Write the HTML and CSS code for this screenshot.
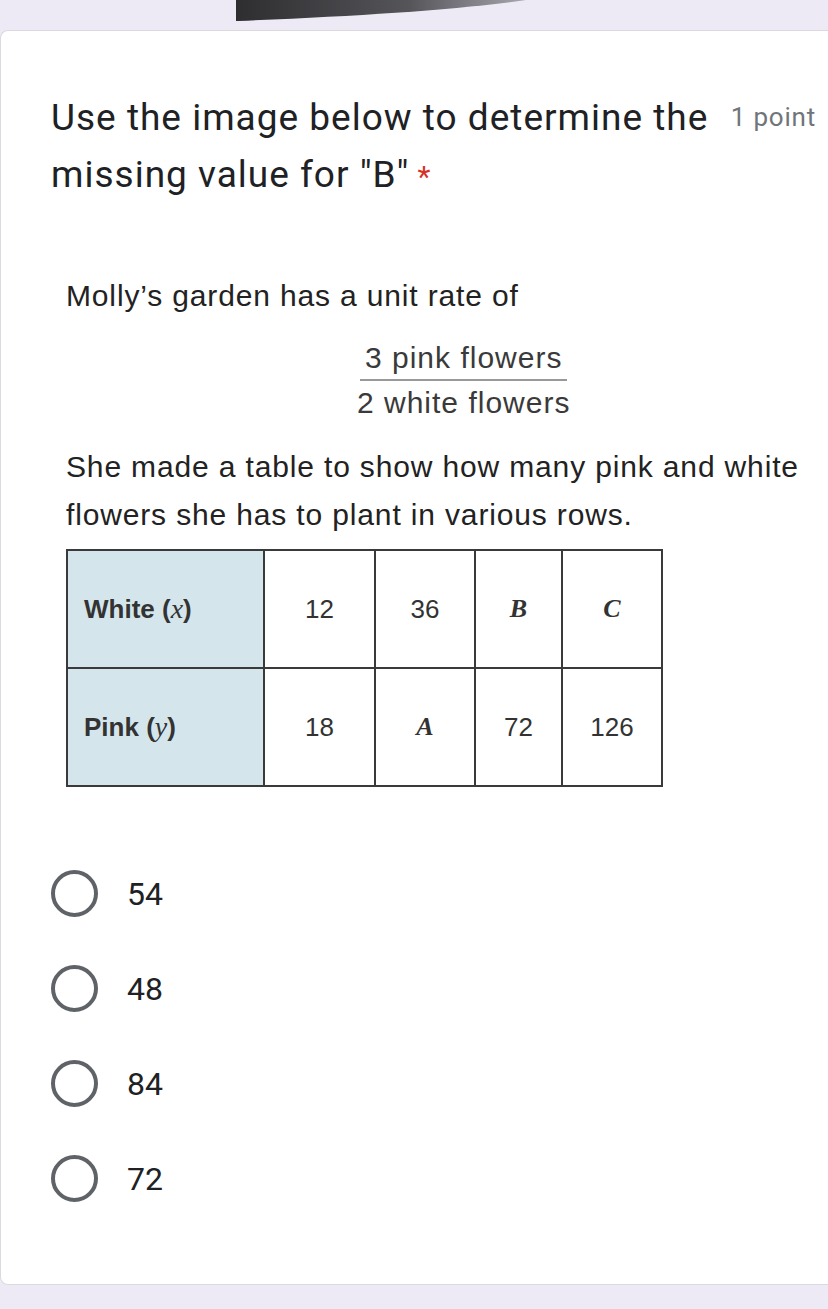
FILE: index.html
```html
<!DOCTYPE html>
<html>
<head>
<meta charset="utf-8">
<link rel="stylesheet" href="styles.css">
</head>
<body>
<div class="top-band">
  <svg class="top-shape" width="300" height="24" viewBox="0 0 300 24">
    <defs>
      <linearGradient id="g" x1="0" y1="0" x2="1" y2="0">
        <stop offset="0" stop-color="#2e2e30"/>
        <stop offset="0.6" stop-color="#55555a"/>
        <stop offset="1" stop-color="#a8a6ae"/>
      </linearGradient>
    </defs>
    <path d="M0 0 L290 0 C220 10 120 16 2 21 L0 21 Z" fill="url(#g)"/>
  </svg>
</div>
<main class="card">
  <div class="title-row">
    <h1 class="title">Use the image below to determine the missing value for "B"<span class="req">*</span></h1>
    <span class="points">1 point</span>
  </div>
  <div class="figure">
    <p class="fig-text">Molly’s garden has a unit rate of</p>
    <div class="frac-wrap">
      <div class="frac">
        <span class="num">3 pink flowers</span>
        <span class="den">2 white flowers</span>
      </div>
    </div>
    <p class="fig-text para">She made a table to show how many pink and white flowers she has to plant in various rows.</p>
    <table class="data">
      <colgroup>
        <col class="w0"><col class="w1"><col class="w2"><col class="w3"><col class="w4">
      </colgroup>
      <tr>
        <th>White (<i>x</i>)</th>
        <td>12</td>
        <td>36</td>
        <td class="var">B</td>
        <td class="var">C</td>
      </tr>
      <tr>
        <th>Pink (<i>y</i>)</th>
        <td>18</td>
        <td class="var">A</td>
        <td>72</td>
        <td>126</td>
      </tr>
    </table>
  </div>
  <ul class="options">
    <li class="opt"><span class="radio"></span><span class="label">54</span></li>
    <li class="opt"><span class="radio"></span><span class="label">48</span></li>
    <li class="opt"><span class="radio"></span><span class="label">84</span></li>
    <li class="opt"><span class="radio"></span><span class="label">72</span></li>
  </ul>
</main>
<div class="bottom-band"></div>
</body>
</html>
```
FILE: styles.css
```css
html, body {
  margin: 0;
  padding: 0;
}
body {
  background: #edeaf5;
  font-family: Roboto, "Noto Sans", sans-serif;
  width: 828px;
  height: 1309px;
  overflow: hidden;
}
.top-band {
  height: 30px;
  position: relative;
}
.top-shape {
  position: absolute;
  left: 236px;
  top: 0;
}
.card {
  background: #fff;
  border: 1px solid #dcdae0;
  border-right: none;
  border-radius: 8px 0 0 8px;
  height: 1255px;
  box-sizing: border-box;
  padding: 0 12px 0 50px;
}
.title-row {
  display: flex;
  align-items: flex-start;
  margin-top: 58px;
}
.title {
  flex: 1;
  margin: 0;
  font-weight: 400;
  font-size: 37px;
  line-height: 57px;
  color: #202124;
  letter-spacing: 1px;
}
.req {
  color: #d93025;
  font-size: 30px;
  margin-left: 8px;
}
.points {
  font-size: 26px;
  color: #70757a;
  line-height: 57px;
  margin-left: 8px;
  letter-spacing: 0.8px;
  white-space: nowrap;
}
.figure {
  margin-top: 67px;
  padding-left: 15px;
  font-family: "Liberation Sans", Arial, sans-serif;
  color: #222;
}
.fig-text {
  margin: 0;
  font-size: 30px;
  line-height: 48px;
  letter-spacing: 0.85px;
}
.frac-wrap {
  padding-left: 291px;
  margin-top: 21px;
}
.frac {
  display: inline-flex;
  flex-direction: column;
  align-items: center;
  color: #3a3a3a;
  font-size: 30px;
  letter-spacing: 1px;
}
.num {
  border-bottom: 2px solid #999;
  padding: 0 5px 4px;
  line-height: 34px;
}
.den {
  line-height: 44px;
}
.para {
  margin-top: 18px;
}
.data {
  margin-top: 10px;
  border-collapse: collapse;
  table-layout: fixed;
  width: 597px;
  font-size: 26px;
  color: #333;
}
.w0 { width: 197px; }
.w1 { width: 111px; }
.w2 { width: 100px; }
.w3 { width: 87px; }
.w4 { width: 100px; }
.data th, .data td {
  border: 2px solid #3a3a3a;
  height: 116px;
  padding: 0;
  text-align: center;
}
.data th {
  background: #d4e6ec;
  text-align: left;
  padding-left: 16px;
  font-weight: 700;
  color: #333;
  font-size: 26px;
}
.data th i {
  font-family: "Liberation Serif", serif;
  font-weight: 400;
  font-size: 28px;
}
.var {
  font-family: "Liberation Serif", serif;
  font-style: italic;
  font-weight: 700;
  font-size: 26px;
}
.options {
  list-style: none;
  margin: 59px 0 0;
  padding: 0;
}
.opt {
  display: flex;
  align-items: center;
  height: 95px;
}
.radio {
  width: 47px;
  height: 47px;
  border: 4px solid #5f6368;
  border-radius: 50%;
  box-sizing: border-box;
  flex: none;
}
.label {
  margin-left: 29px;
  font-size: 32px;
  color: #202124;
}
.bottom-band {
  height: 24px;
}
```
